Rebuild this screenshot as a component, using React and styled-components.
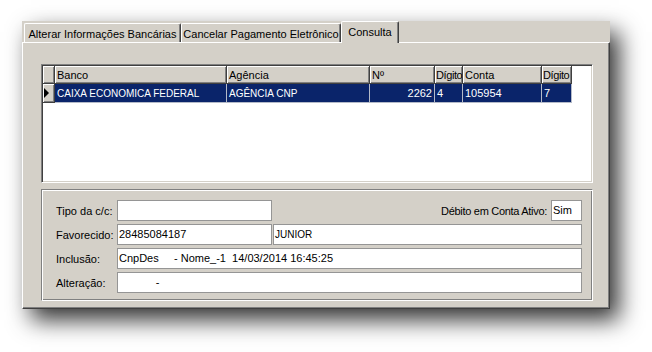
import React from "react";
import styled, { createGlobalStyle } from "styled-components";

const GlobalStyle = createGlobalStyle`
  html, body { margin: 0; background: #fff; }
  body {
    font-family: "Liberation Sans", Arial, sans-serif;
    font-size: 11px;
    color: #000;
  }
`;

const Stage = styled.div`
  box-sizing: border-box;
  width: 652px;
  height: 352px;
  padding: 21px 0 0 22px;
`;

const Window = styled.div`
  width: 588px;
  height: 288px;
  background: #d4d0c8;
  box-shadow: 9px 11px 22px rgba(0, 0, 0, 0.8);
  display: flex;
  flex-direction: column;
`;

const TabStrip = styled.div`
  display: flex;
  align-items: flex-end;
  height: 21px;
  padding-left: 2px;
`;

const Tab = styled.div`
  position: relative;
  z-index: ${(p) => (p.$active ? 1 : 0)};
  box-sizing: border-box;
  width: ${(p) => p.$w}px;
  height: ${(p) => (p.$active ? 22 : 19)}px;
  margin-bottom: ${(p) => (p.$active ? -1 : 0)}px;
  background: #d4d0c8;
  border-left: 1px solid #fff;
  border-top: 1px solid #fff;
  border-right: 1px solid #404040;
  box-shadow: inset -1px 0 #808080;
  border-radius: 2px 2px 0 0;
  padding-top: 3px;
  line-height: 14px;
  text-align: center;
  white-space: nowrap;
`;

const Page = styled.div`
  flex: 1;
  display: flex;
  flex-direction: column;
  gap: 6px;
  border-top: 1px solid #fff;
  border-left: 1px solid #fff;
  border-right: 1px solid #404040;
  border-bottom: 1px solid #404040;
  box-shadow: inset -1px -1px #808080;
  padding: 21px 16px 6px 18px;
`;

const Grid = styled.div`
  box-sizing: border-box;
  height: 119px;
  background: #fff;
  border-top: 1px solid #808080;
  border-left: 1px solid #808080;
  border-right: 1px solid #fff;
  border-bottom: 1px solid #fff;
  box-shadow: inset 1px 1px #404040, inset -1px -1px #d4d0c8;
  padding: 1px;
`;

const GridRow = styled.div`
  display: flex;
  height: ${(p) => p.$h}px;
`;

const HeadCell = styled.div`
  box-sizing: border-box;
  width: ${(p) => p.$w}px;
  flex: none;
  background: #d4d0c8;
  border-right: 1px solid #404040;
  border-bottom: 1px solid #404040;
  box-shadow: inset 1px 1px #fff, inset -1px -1px #808080;
  padding-left: ${(p) => (p.$tight ? 1 : 2)}px;
  padding-top: 1px;
  line-height: 16px;
  letter-spacing: ${(p) => (p.$tight ? "-0.4px" : "0")};
  white-space: nowrap;
  overflow: hidden;
`;

const Indicator = styled.div`
  box-sizing: border-box;
  width: 12px;
  flex: none;
  display: flex;
  align-items: center;
  padding-left: 1px;
  background: #d4d0c8;
  border-right: 1px solid #404040;
  border-bottom: 1px solid #404040;
  box-shadow: inset 1px 1px #fff, inset -1px -1px #808080;
`;

const Arrow = styled.span`
  width: 0;
  height: 0;
  border-top: 5px solid transparent;
  border-bottom: 5px solid transparent;
  border-left: 5px solid #000;
`;

const DataCell = styled.div`
  box-sizing: border-box;
  width: ${(p) => p.$w}px;
  flex: none;
  background: #0a246a;
  color: #fff;
  border-right: 1px solid #b4bac8;
  border-bottom: 1px solid #b4bac8;
  padding: 1px 2px 0;
  line-height: 17px;
  font-size: ${(p) => (p.$caps ? 10 : 11)}px;
  text-align: ${(p) => p.$align || "left"};
  white-space: nowrap;
  overflow: hidden;
`;

const Group = styled.div`
  box-sizing: border-box;
  height: 112px;
  border-top: 1px solid #808080;
  border-left: 1px solid #808080;
  border-right: 1px solid #fff;
  border-bottom: 1px solid #fff;
  box-shadow: inset 1px 1px #fff, inset -1px -1px #808080;
  padding: 10px 10px 0 14px;
  display: flex;
  flex-direction: column;
  gap: 3px;
`;

const FormRow = styled.div`
  display: flex;
  align-items: center;
  height: 21px;
  gap: ${(p) => p.$gap || 0}px;
`;

const Label = styled.span`
  width: ${(p) => (p.$w ? `${p.$w}px` : "auto")};
  flex: none;
  margin-right: ${(p) => p.$mr || 0}px;
  letter-spacing: ${(p) => (p.$tight ? "-0.3px" : "0")};
  white-space: nowrap;
`;

const Spacer = styled.div`
  flex: 1;
`;

const Field = styled.div`
  box-sizing: border-box;
  height: 21px;
  ${(p) => (p.$w ? `width: ${p.$w}px; flex: none;` : "flex: 1;")}
  background: #fff;
  border: 1px solid #959595;
  padding-left: 1px;
  line-height: 19px;
  font-size: ${(p) => (p.$caps ? 10 : 11)}px;
  white-space: pre;
  overflow: hidden;
`;

const columns = [
  { title: "Banco", w: 172, value: "CAIXA ECONOMICA FEDERAL", caps: true },
  { title: "Agência", w: 143, value: "AGÊNCIA CNP", caps: true },
  { title: "Nº", w: 65, value: "2262", align: "right" },
  { title: "Dígito", w: 28, value: "4", tight: true },
  { title: "Conta", w: 79, value: "105954" },
  { title: "Dígito", w: 30, value: "7", tight: true },
];

export default function App() {
  return (
    <>
      <GlobalStyle />
      <Stage>
        <Window>
          <TabStrip>
            <Tab $w={157}>Alterar Informações Bancárias</Tab>
            <Tab $w={160}>Cancelar Pagamento Eletrônico</Tab>
            <Tab $w={58} $active>
              Consulta
            </Tab>
          </TabStrip>
          <Page>
            <Grid>
              <GridRow $h={18}>
                <HeadCell $w={12} />
                {columns.map((c, i) => (
                  <HeadCell key={i} $w={c.w} $tight={c.tight}>
                    {c.title}
                  </HeadCell>
                ))}
              </GridRow>
              <GridRow $h={19}>
                <Indicator>
                  <Arrow />
                </Indicator>
                {columns.map((c, i) => (
                  <DataCell key={i} $w={c.w} $caps={c.caps} $align={c.align}>
                    {c.value}
                  </DataCell>
                ))}
              </GridRow>
            </Grid>
            <Group>
              <FormRow>
                <Label $w={61}>Tipo da c/c:</Label>
                <Field $w={155} />
                <Spacer />
                <Label $mr={4} $tight>
                  Débito em Conta Ativo:
                </Label>
                <Field $w={31}>Sim</Field>
              </FormRow>
              <FormRow $gap={1}>
                <Label $w={60}>Favorecido:</Label>
                <Field $w={155}>28485084187</Field>
                <Field $caps>JUNIOR</Field>
              </FormRow>
              <FormRow>
                <Label $w={61}>Inclusão:</Label>
                <Field>{"CnpDes     - Nome_-1  14/03/2014 16:45:25"}</Field>
              </FormRow>
              <FormRow>
                <Label $w={61}>Alteração:</Label>
                <Field>{"            -"}</Field>
              </FormRow>
            </Group>
          </Page>
        </Window>
      </Stage>
    </>
  );
}
